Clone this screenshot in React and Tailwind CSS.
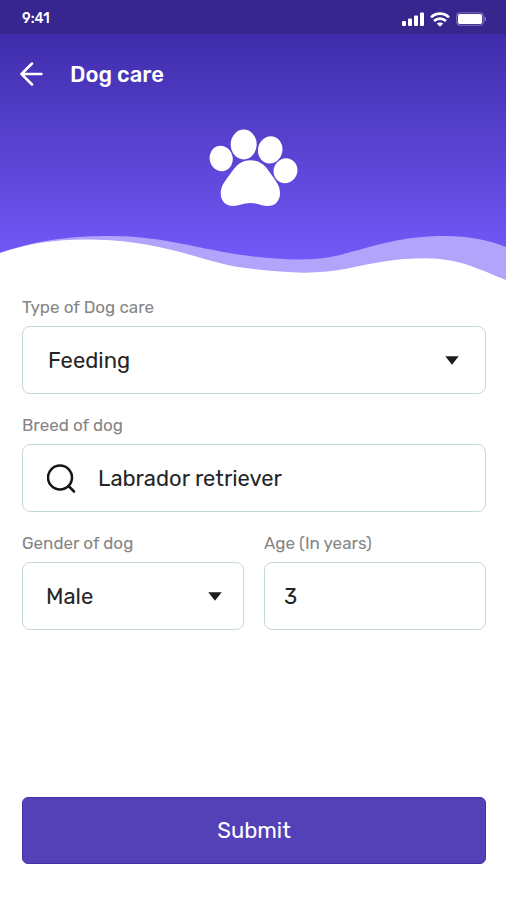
const fieldBox =
  "h-[68px] w-full rounded-lg border border-[#c6d7dc] bg-white text-[22px] text-[#252527] outline-none focus:border-[#5441b8]";

function StatusBar() {
  return (
    <div className="flex h-[34px] items-center justify-between bg-[#38268f] pt-1 pr-5 pl-[22px] text-white">
      <span className="text-sm font-medium">9:41</span>
      <div className="flex items-center gap-1.5">
        <svg className="h-[15px] w-[22px]" viewBox="0 0 22 15" fill="currentColor" aria-hidden="true">
          <rect x="0" y="9" width="4" height="5" rx="1" />
          <rect x="6" y="6.5" width="4" height="7.5" rx="1" />
          <rect x="12" y="3.5" width="4" height="10.5" rx="1" />
          <rect x="18" y="0.5" width="4" height="13.5" rx="1" />
        </svg>
        <svg className="h-[15px] w-5" viewBox="0 0 20 15" fill="none" stroke="currentColor" strokeWidth="2.6" aria-hidden="true">
          <path d="M1 5.4 C6 0.4 14 0.4 19 5.4" />
          <path d="M4 9 C7.5 5.8 12.5 5.8 16 9" />
          <path d="M6.7 11.6 C8.6 10 11.4 10 13.3 11.6 L10 14.8 Z" fill="currentColor" stroke="none" />
        </svg>
        <svg className="h-[14px] w-[30px]" viewBox="0 0 30 14" fill="none" aria-hidden="true">
          <rect x="0.75" y="0.75" width="26.5" height="12.5" rx="3.5" stroke="#fff" strokeOpacity="0.35" strokeWidth="1.2" />
          <rect x="2" y="2" width="24" height="10" rx="1.8" fill="#fff" />
          <path d="M28.6 4.6 C30.4 5.2 30.4 8.8 28.6 9.4 Z" fill="#fff" fillOpacity="0.5" />
        </svg>
      </div>
    </div>
  );
}

function Paw() {
  return (
    <svg className="mx-auto mt-3.5 block h-20 w-[90px]" viewBox="0 0 90 80" fill="#fff" aria-hidden="true">
      <ellipse cx="13.2" cy="30.5" rx="11.5" ry="12.8" transform="rotate(-14 13.2 30.5)" />
      <ellipse cx="35.7" cy="16.5" rx="13" ry="15" />
      <ellipse cx="62.2" cy="21.9" rx="12.2" ry="13.7" transform="rotate(12 62.2 21.9)" />
      <ellipse cx="77.5" cy="42.7" rx="11.8" ry="12.6" transform="rotate(24 77.5 42.7)" />
      <path d="M42.5 32.3 C51 32.3 56.5 36.5 61.5 44 C66 51 72 56.5 72 65 C72 73.5 66.5 78 60 78 C53.5 78 50 75 42.5 75 C35 75 31 78 25 78 C17.5 78 12.7 72.5 12.7 65.5 C12.7 56.5 19 51 24 43.5 C29 36.5 34 32.3 42.5 32.3 Z" />
    </svg>
  );
}

function Waves() {
  return (
    <svg className="mt-[22px] block h-[50px] w-full" viewBox="0 0 506 50" preserveAspectRatio="none" aria-hidden="true">
      <path d="M0 23 C40 9 75 6 110 6 C165 6 200 20 253 26.5 C285 30 315 31.5 340 25 C375 16 400 6 445 6 C470 6 488 10 506 17 V50 H0 Z" fill="#b2a4fb" />
      <path d="M0 23 C30 13 55 9.5 85 9.5 C120 9.5 150 14 180 22 C205 29 225 36 253 39 C290 43.5 320 44.5 350 38 C375 33 395 28.3 425 28.3 C460 28.3 480 40 506 50 V51 H0 Z" fill="#fff" />
    </svg>
  );
}

function Caret({ className }) {
  return (
    <svg className={`pointer-events-none absolute top-[30px] h-[9px] w-3.5 ${className}`} viewBox="0 0 14 9" fill="#1c1c1e" aria-hidden="true">
      <path d="M0.3 0.2 H13.7 L7 8.8 Z" />
    </svg>
  );
}

function Field({ id, label, children }) {
  return (
    <div className="flex min-w-0 flex-col gap-[9px]">
      <label htmlFor={id} className="text-[17px] leading-5 text-[#858585]">
        {label}
      </label>
      <div className="relative">{children}</div>
    </div>
  );
}

export default function App() {
  return (
    <div className="flex min-h-screen flex-col bg-white font-[Rubik,Roboto,sans-serif]">
      <StatusBar />
      <header className="bg-linear-to-b from-[#3f2dab] to-[#785cff]">
        <div className="flex h-20 items-center gap-[26px] pl-5 text-white">
          <button type="button" aria-label="Back">
            <svg className="block h-6 w-6" viewBox="0 0 24 24" fill="none" stroke="currentColor" strokeWidth="2.5" strokeLinecap="round" strokeLinejoin="round" aria-hidden="true">
              <path d="M21.5 12 H1.5 M12 1.5 L1.5 12 L12 22.5" />
            </svg>
          </button>
          <h1 className="text-[22px] font-medium">Dog care</h1>
        </div>
        <Paw />
        <Waves />
      </header>

      <form className="flex flex-1 flex-col pt-[17px] pr-5 pb-9 pl-[22px]" onSubmit={(e) => e.preventDefault()}>
        <div className="flex flex-col gap-[21px]">
          <Field id="care" label="Type of Dog care">
            <select id="care" defaultValue="Feeding" className={`${fieldBox} appearance-none pr-12 pl-[25px]`}>
              <option>Feeding</option>
              <option>Walking</option>
              <option>Grooming</option>
            </select>
            <Caret className="right-[27px]" />
          </Field>
          <Field id="breed" label="Breed of dog">
            <svg className="pointer-events-none absolute top-5 left-[25px] h-[30px] w-[30px]" viewBox="0 0 30 30" fill="none" stroke="#151515" strokeWidth="2.5" strokeLinecap="round" aria-hidden="true">
              <circle cx="13" cy="13.5" r="12" />
              <path d="M21.5 22 L27 27.5" />
            </svg>
            <input id="breed" type="text" defaultValue="Labrador retriever" className={`${fieldBox} pr-5 pl-[75px]`} />
          </Field>
          <div className="grid grid-cols-2 gap-5">
            <Field id="gender" label="Gender of dog">
              <select id="gender" defaultValue="Male" className={`${fieldBox} appearance-none pr-12 pl-[23px]`}>
                <option>Male</option>
                <option>Female</option>
              </select>
              <Caret className="right-[22px]" />
            </Field>
            <Field id="age" label="Age (In years)">
              <input id="age" type="text" inputMode="numeric" defaultValue="3" className={`${fieldBox} px-[19px]`} />
            </Field>
          </div>
        </div>
        <div className="mt-auto pt-8">
          <button type="submit" className="block h-[67px] w-full rounded-md border border-[#4530a8] bg-[#5441b8] text-[22px] text-white">
            Submit
          </button>
        </div>
      </form>
    </div>
  );
}
